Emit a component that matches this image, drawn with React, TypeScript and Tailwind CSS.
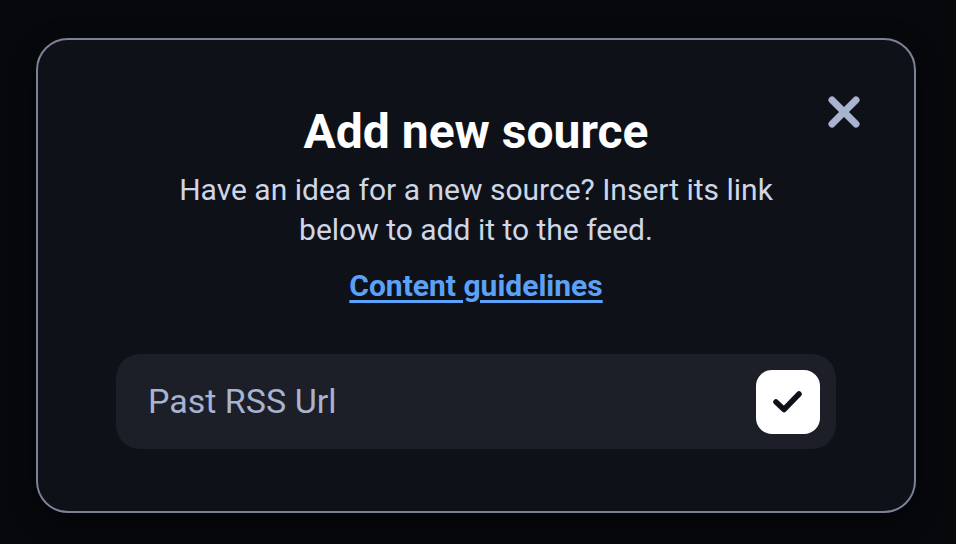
import React from "react";

function CloseIcon() {
  return (
    <svg width="36" height="36" viewBox="0 0 36 36" fill="none">
      <path d="M6 6L30 30M30 6L6 30" stroke="#a8b3cf" strokeWidth="7" strokeLinecap="round" />
    </svg>
  );
}

function CheckIcon() {
  return (
    <svg width="64" height="64" viewBox="0 0 64 64" fill="none">
      <path d="M20 32L28 39.5L43 24" stroke="#0e1117" strokeWidth="5.5" strokeLinecap="round" strokeLinejoin="round" />
    </svg>
  );
}

export default function App() {
  return (
    <div
      className="w-[956px] h-[544px] bg-[#06080c] pt-[38px] pl-[36px]"
      style={{ fontFamily: "Roboto, 'Liberation Sans', sans-serif" }}
    >
      <div className="relative w-[880px] h-[475px] rounded-[32px] border-2 border-[#7b8296] bg-[#0f1118] shadow-[0_8px_24px_rgba(0,0,0,0.5)] flex flex-col items-center px-[78px]">
        <button className="absolute right-[52px] top-[54px] w-[36px] h-[36px] flex items-center justify-center">
          <CloseIcon />
        </button>
        <h1 className="mt-[66px] text-[48px] leading-[52px] font-bold text-white">Add new source</h1>
        <p className="mt-[12px] w-[620px] text-center text-[30px] leading-[40px] text-[#cfd6e6]">
          Have an idea for a new source? Insert its link below to add it to the feed.
        </p>
        <a className="mt-[18px] text-[30px] leading-[36px] font-bold text-[#5ba1f7] underline underline-offset-[4px]">
          Content guidelines
        </a>
        <div className="mt-[50px] w-full h-[95px] rounded-[24px] bg-[#1c1f27] flex items-center pl-[32px] pr-[16px]">
          <span className="flex-1 text-[34px] text-[#a8b3cf]">Past RSS Url</span>
          <div className="w-[64px] h-[64px] rounded-[16px] bg-white flex items-center justify-center">
            <CheckIcon />
          </div>
        </div>
      </div>
    </div>
  );
}
